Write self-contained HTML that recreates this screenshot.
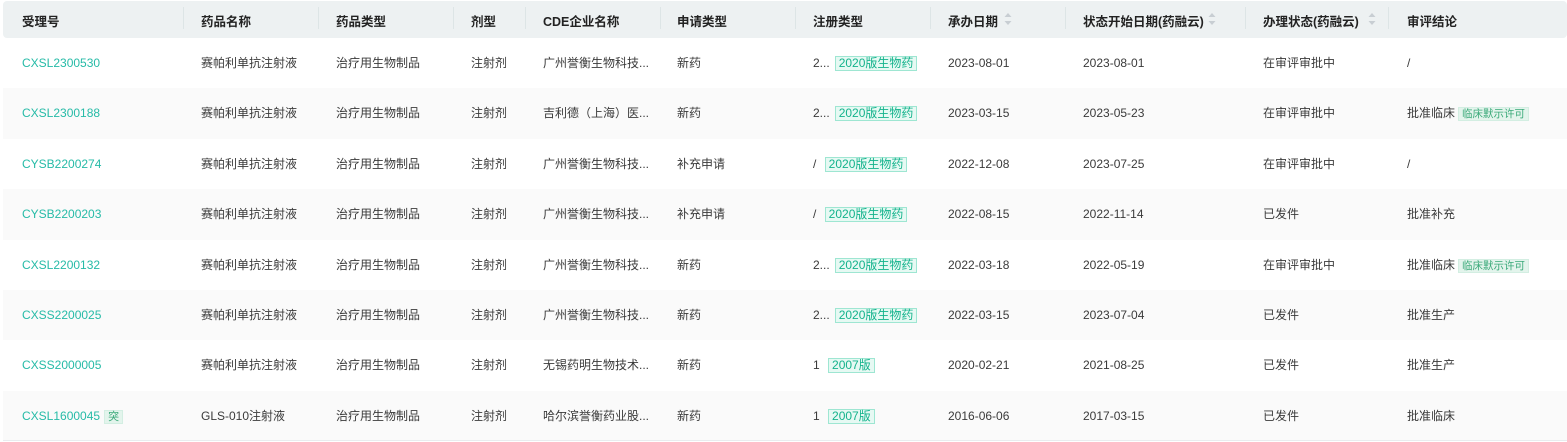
<!DOCTYPE html>
<html><head><meta charset="utf-8"><style>
*{margin:0;padding:0;box-sizing:border-box}
body{width:1567px;height:442px;background:#fff;font-family:"Liberation Sans","Noto Sans CJK SC",sans-serif;font-size:12px;color:#3a3a3a;position:relative;overflow:hidden}
.hd{position:absolute;left:3px;top:1px;width:1564px;height:37px;background:#edf1f2;border-radius:4px}
.h{position:absolute;top:11px;font-weight:bold;font-size:12.5px;color:#222;white-space:nowrap}
.sep{position:absolute;top:7px;width:1px;height:22px;background:#dde5e6}
.row{position:absolute;left:3px;width:1564px;height:50.4px}
.alt{background:#fafafa}
.c{position:absolute;white-space:nowrap;line-height:14px}
.lk{color:#26bba7}
.tag{display:inline-block;border:1px solid #9ee6d2;background:#e6f9f3;color:#14b38c;padding:0 3px;line-height:13px;font-size:12px;margin-left:5px}
.tg2{display:inline-block;border:1px solid #d3eee2;background:#e3f4ec;color:#3aa979;padding:0 3px;line-height:12px;font-size:10.5px;margin-left:3px}
.sort{position:absolute;top:12px;width:8px;height:14px}
.bl{position:absolute;left:3px;top:440px;width:1564px;height:1px;background:#e9ecef}
</style></head><body>
<div class="hd"></div>
<div class="h" style="left:22px">受理号</div>
<div class="sep" style="left:183px"></div>
<div class="h" style="left:201px">药品名称</div>
<div class="sep" style="left:318px"></div>
<div class="h" style="left:336px">药品类型</div>
<div class="sep" style="left:453px"></div>
<div class="h" style="left:471px">剂型</div>
<div class="sep" style="left:525px"></div>
<div class="h" style="left:543px">CDE企业名称</div>
<div class="sep" style="left:660px"></div>
<div class="h" style="left:677px">申请类型</div>
<div class="sep" style="left:795px"></div>
<div class="h" style="left:813px">注册类型</div>
<div class="sep" style="left:930px"></div>
<div class="h" style="left:948px">承办日期</div>
<svg class="sort" style="left:1004px" viewBox="0 0 8 14"><path d="M4 1L7.5 5H0.5Z" fill="#c8ced3"/><path d="M4 13L7.5 9H0.5Z" fill="#c8ced3"/></svg>
<div class="sep" style="left:1065px"></div>
<div class="h" style="left:1083px">状态开始日期(药融云)</div>
<svg class="sort" style="left:1208px" viewBox="0 0 8 14"><path d="M4 1L7.5 5H0.5Z" fill="#c8ced3"/><path d="M4 13L7.5 9H0.5Z" fill="#c8ced3"/></svg>
<div class="sep" style="left:1245px"></div>
<div class="h" style="left:1263px">办理状态(药融云)</div>
<svg class="sort" style="left:1368px" viewBox="0 0 8 14"><path d="M4 1L7.5 5H0.5Z" fill="#c8ced3"/><path d="M4 13L7.5 9H0.5Z" fill="#c8ced3"/></svg>
<div class="sep" style="left:1388px"></div>
<div class="h" style="left:1407px">审评结论</div>

<div class="row" style="top:38px"></div>
<div class="row alt" style="top:88.4px"></div>
<div class="row" style="top:138.8px"></div>
<div class="row alt" style="top:189.2px"></div>
<div class="row" style="top:239.6px"></div>
<div class="row alt" style="top:290px"></div>
<div class="row" style="top:340.4px"></div>
<div class="row alt" style="top:390.8px"></div>
<div class="bl"></div>

<div style="position:absolute;left:0;top:56px">
<div class="c lk" style="left:22px">CXSL2300530</div><div class="c" style="left:201px">赛帕利单抗注射液</div><div class="c" style="left:336px">治疗用生物制品</div><div class="c" style="left:471px">注射剂</div><div class="c" style="left:543px">广州誉衡生物科技...</div><div class="c" style="left:677px">新药</div><div class="c" style="left:813px">2...<span class="tag">2020版生物药</span></div><div class="c" style="left:948px">2023-08-01</div><div class="c" style="left:1083px">2023-08-01</div><div class="c" style="left:1263px">在审评审批中</div><div class="c" style="left:1407px">/</div>
</div>
<div style="position:absolute;left:0;top:106.4px">
<div class="c lk" style="left:22px">CXSL2300188</div><div class="c" style="left:201px">赛帕利单抗注射液</div><div class="c" style="left:336px">治疗用生物制品</div><div class="c" style="left:471px">注射剂</div><div class="c" style="left:543px">吉利德（上海）医...</div><div class="c" style="left:677px">新药</div><div class="c" style="left:813px">2...<span class="tag">2020版生物药</span></div><div class="c" style="left:948px">2023-03-15</div><div class="c" style="left:1083px">2023-05-23</div><div class="c" style="left:1263px">在审评审批中</div><div class="c" style="left:1407px">批准临床<span class="tg2">临床默示许可</span></div>
</div>
<div style="position:absolute;left:0;top:156.8px">
<div class="c lk" style="left:22px">CYSB2200274</div><div class="c" style="left:201px">赛帕利单抗注射液</div><div class="c" style="left:336px">治疗用生物制品</div><div class="c" style="left:471px">注射剂</div><div class="c" style="left:543px">广州誉衡生物科技...</div><div class="c" style="left:677px">补充申请</div><div class="c" style="left:813px">/ <span class="tag">2020版生物药</span></div><div class="c" style="left:948px">2022-12-08</div><div class="c" style="left:1083px">2023-07-25</div><div class="c" style="left:1263px">在审评审批中</div><div class="c" style="left:1407px">/</div>
</div>
<div style="position:absolute;left:0;top:207.2px">
<div class="c lk" style="left:22px">CYSB2200203</div><div class="c" style="left:201px">赛帕利单抗注射液</div><div class="c" style="left:336px">治疗用生物制品</div><div class="c" style="left:471px">注射剂</div><div class="c" style="left:543px">广州誉衡生物科技...</div><div class="c" style="left:677px">补充申请</div><div class="c" style="left:813px">/ <span class="tag">2020版生物药</span></div><div class="c" style="left:948px">2022-08-15</div><div class="c" style="left:1083px">2022-11-14</div><div class="c" style="left:1263px">已发件</div><div class="c" style="left:1407px">批准补充</div>
</div>
<div style="position:absolute;left:0;top:257.6px">
<div class="c lk" style="left:22px">CXSL2200132</div><div class="c" style="left:201px">赛帕利单抗注射液</div><div class="c" style="left:336px">治疗用生物制品</div><div class="c" style="left:471px">注射剂</div><div class="c" style="left:543px">广州誉衡生物科技...</div><div class="c" style="left:677px">新药</div><div class="c" style="left:813px">2...<span class="tag">2020版生物药</span></div><div class="c" style="left:948px">2022-03-18</div><div class="c" style="left:1083px">2022-05-19</div><div class="c" style="left:1263px">在审评审批中</div><div class="c" style="left:1407px">批准临床<span class="tg2">临床默示许可</span></div>
</div>
<div style="position:absolute;left:0;top:308px">
<div class="c lk" style="left:22px">CXSS2200025</div><div class="c" style="left:201px">赛帕利单抗注射液</div><div class="c" style="left:336px">治疗用生物制品</div><div class="c" style="left:471px">注射剂</div><div class="c" style="left:543px">广州誉衡生物科技...</div><div class="c" style="left:677px">新药</div><div class="c" style="left:813px">2...<span class="tag">2020版生物药</span></div><div class="c" style="left:948px">2022-03-15</div><div class="c" style="left:1083px">2023-07-04</div><div class="c" style="left:1263px">已发件</div><div class="c" style="left:1407px">批准生产</div>
</div>
<div style="position:absolute;left:0;top:358.4px">
<div class="c lk" style="left:22px">CXSS2000005</div><div class="c" style="left:201px">赛帕利单抗注射液</div><div class="c" style="left:336px">治疗用生物制品</div><div class="c" style="left:471px">注射剂</div><div class="c" style="left:543px">无锡药明生物技术...</div><div class="c" style="left:677px">新药</div><div class="c" style="left:813px">1 <span class="tag">2007版</span></div><div class="c" style="left:948px">2020-02-21</div><div class="c" style="left:1083px">2021-08-25</div><div class="c" style="left:1263px">已发件</div><div class="c" style="left:1407px">批准生产</div>
</div>
<div style="position:absolute;left:0;top:408.8px">
<div class="c lk" style="left:22px">CXSL1600045<span class="tg2" style="margin-left:4px;font-size:11px">突</span></div><div class="c" style="left:201px">GLS-010注射液</div><div class="c" style="left:336px">治疗用生物制品</div><div class="c" style="left:471px">注射剂</div><div class="c" style="left:543px">哈尔滨誉衡药业股...</div><div class="c" style="left:677px">新药</div><div class="c" style="left:813px">1 <span class="tag">2007版</span></div><div class="c" style="left:948px">2016-06-06</div><div class="c" style="left:1083px">2017-03-15</div><div class="c" style="left:1263px">已发件</div><div class="c" style="left:1407px">批准临床</div>
</div>
</body></html>
